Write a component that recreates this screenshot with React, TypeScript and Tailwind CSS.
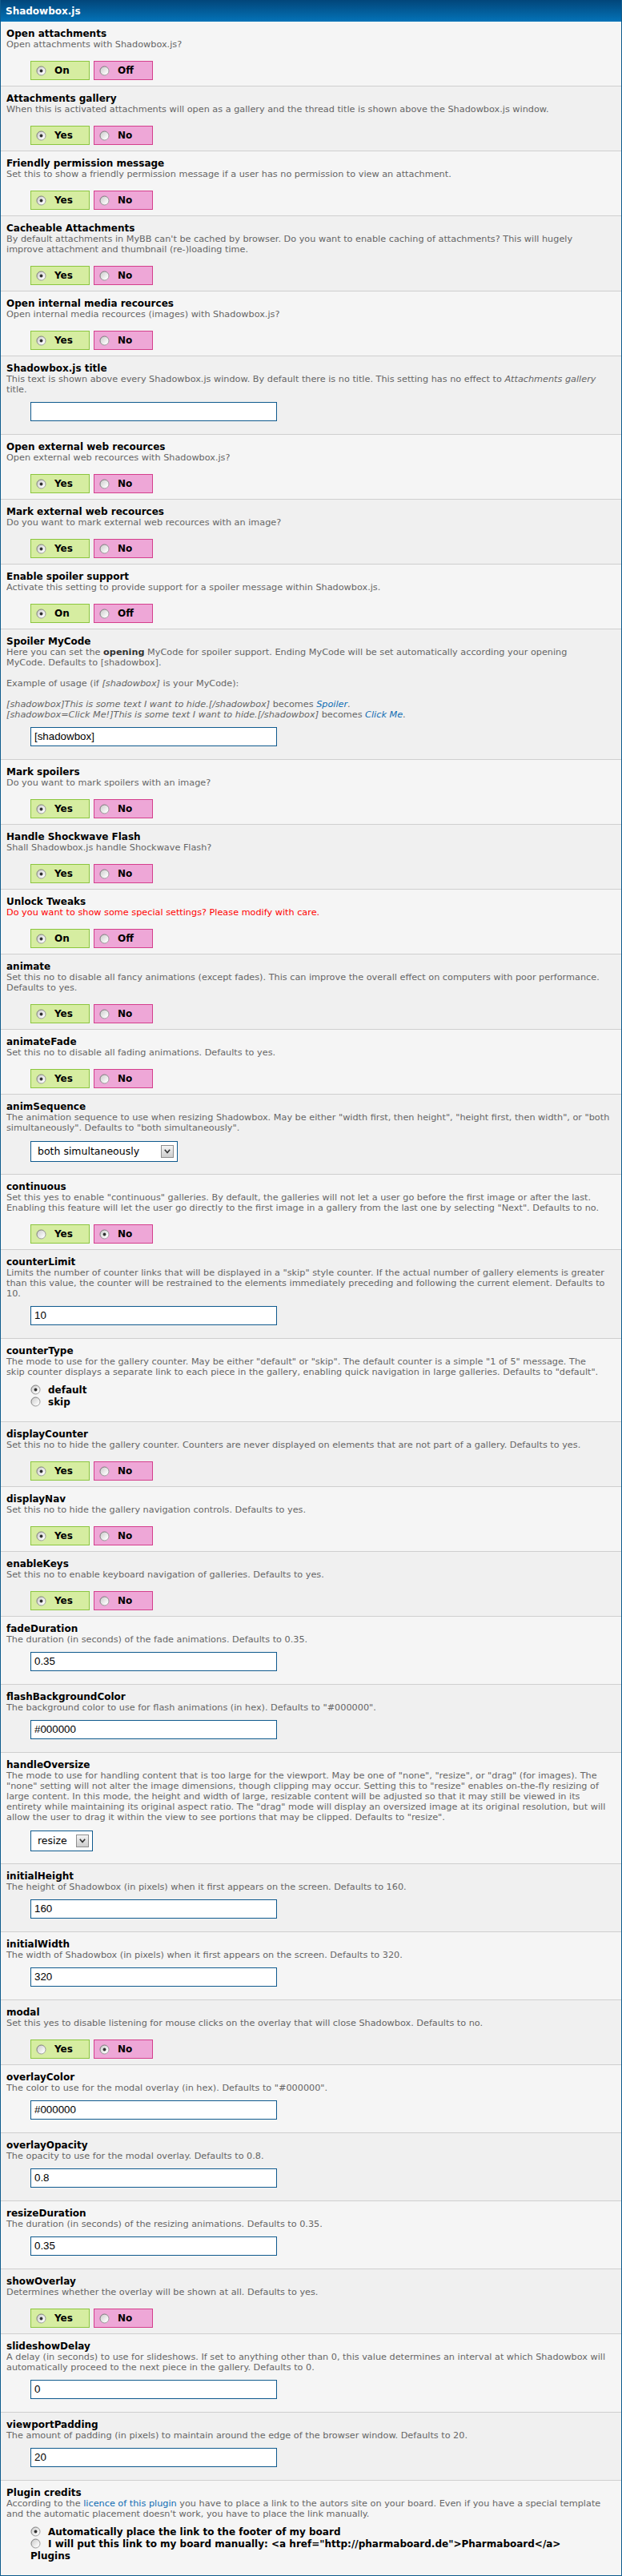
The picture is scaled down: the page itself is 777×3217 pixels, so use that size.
import React from "react";

type Row =
  | { t: string; d: React.ReactNode; k: "yn"; a?: string; b?: string; sel?: 0 | 1 }
  | { t: string; d: React.ReactNode; k: "input"; v: string }
  | { t: string; d: React.ReactNode; k: "select"; v: string; w: string }
  | { t: string; d: React.ReactNode; k: "radios"; items: React.ReactNode[]; sel: number };

function Radio({ checked }: { checked: boolean }) {
  return (
    <svg width="13" height="13" viewBox="0 0 13 13" className="inline-block shrink-0 align-[-2px]">
      <defs>
        <linearGradient id="radioFill" x1="0.15" y1="0.15" x2="0.85" y2="0.85">
          <stop offset="0" stopColor="#d2d2d2" />
          <stop offset="1" stopColor="#ffffff" />
        </linearGradient>
        <linearGradient id="radioStroke" x1="0" y1="0" x2="1" y2="1">
          <stop offset="0" stopColor="#6a6a6a" />
          <stop offset="1" stopColor="#a5a5a5" />
        </linearGradient>
      </defs>
      <circle cx="6.5" cy="6.5" r="5.5" fill="url(#radioFill)" stroke="url(#radioStroke)" strokeWidth="1" />
      {checked && <circle cx="6.5" cy="6.5" r="1.9" fill="#333333" />}
    </svg>
  );
}

function Link({ children, italic }: { children: React.ReactNode; italic?: boolean }) {
  return <span className={italic ? "italic text-[#0e6cb3]" : "text-[#0e6cb3]"}>{children}</span>;
}

function YesNo({ a, b, sel }: { a: string; b: string; sel: 0 | 1 }) {
  return (
    <div className="flex gap-[5px] pl-[30px] pt-[14px] pb-[7px]">
      <div className="flex h-[24px] w-[74px] items-center border border-[#8cc63f] bg-[#d6eda1] pl-[6px]">
        <Radio checked={sel === 0} />
        <span className="ml-[10px] text-[12px] font-bold leading-[14px] text-black">{a}</span>
      </div>
      <div className="flex h-[24px] w-[74px] items-center border border-[#d43f8d] bg-[#eea7d7] pl-[6px]">
        <Radio checked={sel === 1} />
        <span className="ml-[10px] text-[12px] font-bold leading-[14px] text-black">{b}</span>
      </div>
    </div>
  );
}

function TextInput({ v }: { v: string }) {
  return (
    <div className="pl-[30px] pt-[9px] pb-[16px]">
      <div className="flex h-[24px] w-[308px] items-center border border-[#0f5a8e] bg-white pl-[4px] font-['Liberation_Sans',Arial,sans-serif] text-[13.33px] text-black">
        {v}
      </div>
    </div>
  );
}

function Select({ v, w }: { v: string; w: string }) {
  return (
    <div className="pl-[30px] pt-[10px] pb-[15px]">
      <div className={"flex h-[26px] items-center justify-between border border-[#0f5a8e] bg-white pl-[8px] pr-[4px] " + w}>
        <span className="text-[12.5px] leading-[14px] text-black">{v}</span>
        <span className="flex h-[16px] w-[16px] items-center justify-center border border-[#8f8f8f] bg-gradient-to-b from-[#f4f4f4] to-[#cdcdcd]">
          <svg width="8" height="6" viewBox="0 0 8 6">
            <path d="M0.8 0.8 L4 4.6 L7.2 0.8" fill="none" stroke="#333" strokeWidth="1.6" />
          </svg>
        </span>
      </div>
    </div>
  );
}

function RadioList({ items, sel }: { items: React.ReactNode[]; sel: number }) {
  return (
    <div className="pl-[30px] pt-[9px] pb-[16px]">
      {items.map((it, i) => (
        <div key={i} className="text-[12px] font-bold leading-[15px] text-black">
          <Radio checked={i === sel} />
          <span className="ml-[9px]">{it}</span>
        </div>
      ))}
    </div>
  );
}

const rows: Row[] = [
  { t: "Open attachments", d: "Open attachments with Shadowbox.js?", k: "yn", a: "On", b: "Off" },
  {
    t: "Attachments gallery",
    d: "When this is activated attachments will open as a gallery and the thread title is shown above the Shadowbox.js window.",
    k: "yn",
  },
  {
    t: "Friendly permission message",
    d: "Set this to show a friendly permission message if a user has no permission to view an attachment.",
    k: "yn",
  },
  {
    t: "Cacheable Attachments",
    d: (
      <>
        By default attachments in MyBB can't be cached by browser. Do you want to enable caching of attachments? This will hugely
        <br />
        improve attachment and thumbnail (re-)loading time.
      </>
    ),
    k: "yn",
  },
  { t: "Open internal media recources", d: "Open internal media recources (images) with Shadowbox.js?", k: "yn" },
  {
    t: "Shadowbox.js title",
    d: (
      <>
        This text is shown above every Shadowbox.js window. By default there is no title. This setting has no effect to{" "}
        <i>Attachments gallery</i>
        <br />
        title.
      </>
    ),
    k: "input",
    v: "",
  },
  { t: "Open external web recources", d: "Open external web recources with Shadowbox.js?", k: "yn" },
  { t: "Mark external web recources", d: "Do you want to mark external web recources with an image?", k: "yn" },
  {
    t: "Enable spoiler support",
    d: "Activate this setting to provide support for a spoiler message within Shadowbox.js.",
    k: "yn",
    a: "On",
    b: "Off",
  },
  {
    t: "Spoiler MyCode",
    d: (
      <>
        Here you can set the <b className="text-[#333]">opening</b> MyCode for spoiler support. Ending MyCode will be set automatically according your opening
        <br />
        MyCode. Defaults to [shadowbox].
        <br />
        <br />
        Example of usage (if <i>[shadowbox]</i> is your MyCode):
        <br />
        <br />
        <i>[shadowbox]This is some text I want to hide.[/shadowbox]</i> becomes <Link italic>Spoiler</Link>.
        <br />
        <i>[shadowbox=Click Me!]This is some text I want to hide.[/shadowbox]</i> becomes <Link italic>Click Me</Link>.
      </>
    ),
    k: "input",
    v: "[shadowbox]",
  },
  { t: "Mark spoilers", d: "Do you want to mark spoilers with an image?", k: "yn" },
  { t: "Handle Shockwave Flash", d: "Shall Shadowbox.js handle Shockwave Flash?", k: "yn" },
  {
    t: "Unlock Tweaks",
    d: <span className="text-[#ff0000]">Do you want to show some special settings? Please modify with care.</span>,
    k: "yn",
    a: "On",
    b: "Off",
  },
  {
    t: "animate",
    d: (
      <>
        Set this no to disable all fancy animations (except fades). This can improve the overall effect on computers with poor performance.
        <br />
        Defaults to yes.
      </>
    ),
    k: "yn",
  },
  { t: "animateFade", d: "Set this no to disable all fading animations. Defaults to yes.", k: "yn" },
  {
    t: "animSequence",
    d: (
      <>
        The animation sequence to use when resizing Shadowbox. May be either "width first, then height", "height first, then width", or "both
        <br />
        simultaneously". Defaults to "both simultaneously".
      </>
    ),
    k: "select",
    v: "both simultaneously",
    w: "w-[184px]",
  },
  {
    t: "continuous",
    d: (
      <>
        Set this yes to enable "continuous" galleries. By default, the galleries will not let a user go before the first image or after the last.
        <br />
        Enabling this feature will let the user go directly to the first image in a gallery from the last one by selecting "Next". Defaults to no.
      </>
    ),
    k: "yn",
    sel: 1,
  },
  {
    t: "counterLimit",
    d: (
      <>
        Limits the number of counter links that will be displayed in a "skip" style counter. If the actual number of gallery elements is greater
        <br />
        than this value, the counter will be restrained to the elements immediately preceding and following the current element. Defaults to
        <br />
        10.
      </>
    ),
    k: "input",
    v: "10",
  },
  {
    t: "counterType",
    d: (
      <>
        The mode to use for the gallery counter. May be either "default" or "skip". The default counter is a simple "1 of 5" message. The
        <br />
        skip counter displays a separate link to each piece in the gallery, enabling quick navigation in large galleries. Defaults to "default".
      </>
    ),
    k: "radios",
    items: ["default", "skip"],
    sel: 0,
  },
  {
    t: "displayCounter",
    d: "Set this no to hide the gallery counter. Counters are never displayed on elements that are not part of a gallery. Defaults to yes.",
    k: "yn",
  },
  { t: "displayNav", d: "Set this no to hide the gallery navigation controls. Defaults to yes.", k: "yn" },
  { t: "enableKeys", d: "Set this no to enable keyboard navigation of galleries. Defaults to yes.", k: "yn" },
  { t: "fadeDuration", d: "The duration (in seconds) of the fade animations. Defaults to 0.35.", k: "input", v: "0.35" },
  {
    t: "flashBackgroundColor",
    d: 'The background color to use for flash animations (in hex). Defaults to "#000000".',
    k: "input",
    v: "#000000",
  },
  {
    t: "handleOversize",
    d: (
      <>
        The mode to use for handling content that is too large for the viewport. May be one of "none", "resize", or "drag" (for images). The
        <br />
        "none" setting will not alter the image dimensions, though clipping may occur. Setting this to "resize" enables on-the-fly resizing of
        <br />
        large content. In this mode, the height and width of large, resizable content will be adjusted so that it may still be viewed in its
        <br />
        entirety while maintaining its original aspect ratio. The "drag" mode will display an oversized image at its original resolution, but will
        <br />
        allow the user to drag it within the view to see portions that may be clipped. Defaults to "resize".
      </>
    ),
    k: "select",
    v: "resize",
    w: "w-[78px]",
  },
  {
    t: "initialHeight",
    d: "The height of Shadowbox (in pixels) when it first appears on the screen. Defaults to 160.",
    k: "input",
    v: "160",
  },
  {
    t: "initialWidth",
    d: "The width of Shadowbox (in pixels) when it first appears on the screen. Defaults to 320.",
    k: "input",
    v: "320",
  },
  {
    t: "modal",
    d: "Set this yes to disable listening for mouse clicks on the overlay that will close Shadowbox. Defaults to no.",
    k: "yn",
    sel: 1,
  },
  { t: "overlayColor", d: 'The color to use for the modal overlay (in hex). Defaults to "#000000".', k: "input", v: "#000000" },
  { t: "overlayOpacity", d: "The opacity to use for the modal overlay. Defaults to 0.8.", k: "input", v: "0.8" },
  { t: "resizeDuration", d: "The duration (in seconds) of the resizing animations. Defaults to 0.35.", k: "input", v: "0.35" },
  { t: "showOverlay", d: "Determines whether the overlay will be shown at all. Defaults to yes.", k: "yn" },
  {
    t: "slideshowDelay",
    d: (
      <>
        A delay (in seconds) to use for slideshows. If set to anything other than 0, this value determines an interval at which Shadowbox will
        <br />
        automatically proceed to the next piece in the gallery. Defaults to 0.
      </>
    ),
    k: "input",
    v: "0",
  },
  {
    t: "viewportPadding",
    d: "The amount of padding (in pixels) to maintain around the edge of the browser window. Defaults to 20.",
    k: "input",
    v: "20",
  },
  {
    t: "Plugin credits",
    d: (
      <>
        According to the <Link>licence of this plugin</Link> you have to place a link to the autors site on your board. Even if you have a special template
        <br />
        and the automatic placement doesn't work, you have to place the link manually.
      </>
    ),
    k: "radios",
    items: [
      "Automatically place the link to the footer of my board",
      <>
        I will put this link to my board manually: &lt;a href="http://pharmaboard.de"&gt;Pharmaboard&lt;/a&gt;
        <br />
        Plugins
      </>,
    ],
    sel: 0,
  },
];

function Control({ r }: { r: Row }) {
  if (r.k === "yn") return <YesNo a={r.a ?? "Yes"} b={r.b ?? "No"} sel={r.sel ?? 0} />;
  if (r.k === "input") return <TextInput v={r.v} />;
  if (r.k === "select") return <Select v={r.v} w={r.w} />;
  return <RadioList items={r.items} sel={r.sel} />;
}

export default function App() {
  return (
    <div className="w-[777px] bg-white font-['DejaVu_Sans',Verdana,sans-serif]">
      <div className="border-x border-b border-[#0f5c8e]">
        <div className="h-[27px] bg-gradient-to-b from-[#02467a] to-[#0473b8] px-[6px] pt-[7px] text-[12px] font-bold leading-[14px] text-white">
          Shadowbox.js
        </div>
        {rows.map((r, i) => (
          <div
            key={i}
            className={
              (i % 2 === 0 ? "bg-[#f5f5f5] " : "bg-[#f0f0f0] ") +
              (i === rows.length - 1 ? "" : "border-b border-[#cfcfcf] ") +
              "px-[7px] pt-[8px]"
            }
          >
            <div className="text-[12px] font-bold leading-[14px] text-black">{r.t}</div>
            <div className="whitespace-nowrap text-[11.25px] leading-[13px] text-[#666666]">{r.d}</div>
            <Control r={r} />
          </div>
        ))}
      </div>
    </div>
  );
}
